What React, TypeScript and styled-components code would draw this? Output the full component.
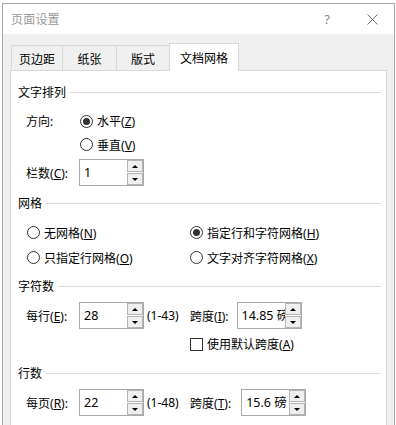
import React from 'react';
import styled, { createGlobalStyle } from 'styled-components';

const GlobalStyle = createGlobalStyle`
    html, body {
        margin: 0;
        padding: 0;
        height: 425px;
        overflow: hidden;
        background: #ffffff;
    }
    body {
        font-family: "Noto Sans", "Noto Sans CJK SC", sans-serif;
        font-size: 12px;
        color: #000000;
    }
`;

const TABS = ['页边距', '纸张', '版式', '文档网格'];
const TAB_WIDTHS = [52, 55, 54, 70];
const ACTIVE_TAB = 3;

const Mn: React.FC<{ text: string; keyChar: string }> = ({ text, keyChar }) => (
    <>
        {text}(<u>{keyChar}</u>)
    </>
);

const Radio: React.FC<{ checked?: boolean; children: React.ReactNode }> = ({ checked, children }) => (
    <RadioLabel>
        <RadioMark $checked={!!checked} />
        <span>{children}</span>
    </RadioLabel>
);

const Spinner: React.FC<{ value: string }> = ({ value }) => (
    <SpinBox>
        <SpinValue>{value}</SpinValue>
        <SpinButtons>
            <SpinButton>
                <ArrowUp />
            </SpinButton>
            <SpinButton>
                <ArrowDown />
            </SpinButton>
        </SpinButtons>
    </SpinBox>
);

const SectionHeader: React.FC<{ title: string }> = ({ title }) => (
    <HeaderRow>
        <span>{title}</span>
        <HeaderLine />
    </HeaderRow>
);

const App: React.FC = () => {
    return (
        <>
            <GlobalStyle />
            <Window>
                <TitleBar>
                    <TitleText>页面设置</TitleText>
                    <HelpButton>?</HelpButton>
                    <CloseButton>
                        <svg width="11" height="11" viewBox="0 0 11 11">
                            <path d="M0.5 0.5 L10.5 10.5 M10.5 0.5 L0.5 10.5" stroke="#707070" strokeWidth="1" />
                        </svg>
                    </CloseButton>
                </TitleBar>
                <Body>
                    <TabRow>
                        {TABS.map((tab, i) => (
                            <Tab key={tab} $active={i === ACTIVE_TAB} $width={TAB_WIDTHS[i]} $first={i === 0}>
                                {tab}
                            </Tab>
                        ))}
                    </TabRow>
                    <Panel>
                        <Section>
                            <SectionHeader title="文字排列" />
                            <SectionBody>
                                <Row $height={24} $top={7}>
                                    <FieldLabel>方向:</FieldLabel>
                                    <Radio checked>
                                        <Mn text="水平" keyChar="Z" />
                                    </Radio>
                                </Row>
                                <Row $height={23}>
                                    <FieldLabel />
                                    <Radio>
                                        <Mn text="垂直" keyChar="V" />
                                    </Radio>
                                </Row>
                                <Row $height={27} $top={3}>
                                    <FieldLabel>
                                        <Mn text="栏数" keyChar="C" />:
                                    </FieldLabel>
                                    <Spinner value="1" />
                                </Row>
                            </SectionBody>
                        </Section>

                        <Section $top={7}>
                            <SectionHeader title="网格" />
                            <SectionBody>
                                <GridRow $top={7}>
                                    <Radio>
                                        <Mn text="无网格" keyChar="N" />
                                    </Radio>
                                    <Radio checked>
                                        <Mn text="指定行和字符网格" keyChar="H" />
                                    </Radio>
                                </GridRow>
                                <GridRow>
                                    <Radio>
                                        <Mn text="只指定行网格" keyChar="O" />
                                    </Radio>
                                    <Radio>
                                        <Mn text="文字对齐字符网格" keyChar="X" />
                                    </Radio>
                                </GridRow>
                            </SectionBody>
                        </Section>

                        <Section $top={6}>
                            <SectionHeader title="字符数" />
                            <SectionBody>
                                <Row $height={27} $top={6}>
                                    <FieldLabel>
                                        <Mn text="每行" keyChar="E" />:
                                    </FieldLabel>
                                    <Spinner value="28" />
                                    <RangeLabel>(1-43)</RangeLabel>
                                    <SpanLabel>
                                        <Mn text="跨度" keyChar="I" />:
                                    </SpanLabel>
                                    <Spinner value="14.85 磅" />
                                </Row>
                                <CheckRow>
                                    <CheckMark />
                                    <span>
                                        <Mn text="使用默认跨度" keyChar="A" />
                                    </span>
                                </CheckRow>
                            </SectionBody>
                        </Section>

                        <Section $top={8}>
                            <SectionHeader title="行数" />
                            <SectionBody>
                                <Row $height={27} $top={6}>
                                    <FieldLabel>
                                        <Mn text="每页" keyChar="R" />:
                                    </FieldLabel>
                                    <Spinner value="22" />
                                    <RangeLabel>(1-48)</RangeLabel>
                                    <SpanLabel $extra={2}>
                                        <Mn text="跨度" keyChar="T" />:
                                    </SpanLabel>
                                    <Spinner value="15.6 磅" />
                                </Row>
                            </SectionBody>
                        </Section>
                    </Panel>
                </Body>
            </Window>
        </>
    );
};

const Window = styled.div`
    margin: 3px 0 0 2px;
    width: 393px;
    height: 422px;
    box-sizing: border-box;
    border: 1px solid #a6a6a6;
    border-bottom: none;
    background: #f0f0f0;
    display: flex;
    flex-direction: column;
    overflow: hidden;
`;

const TitleBar = styled.div`
    height: 30px;
    flex-shrink: 0;
    background: #ffffff;
    display: flex;
    align-items: center;
    padding-left: 8px;
    color: #999999;
`;

const TitleText = styled.div`
    flex: 1;
    letter-spacing: 0.2px;
`;

const HelpButton = styled.div`
    width: 46px;
    text-align: center;
    color: #8a8a8a;
    font-size: 13px;
`;

const CloseButton = styled.div`
    width: 44px;
    display: flex;
    justify-content: center;
    align-items: center;
`;

const Body = styled.div`
    flex: 1;
    min-height: 0;
    display: flex;
    flex-direction: column;
    padding: 9px 7px 0 7px;
`;

const TabRow = styled.div`
    display: flex;
    align-items: flex-end;
    height: 27px;
    flex-shrink: 0;
    padding-left: 1px;
    position: relative;
    z-index: 1;
`;

const Tab = styled.div<{ $active: boolean; $width: number; $first: boolean }>`
    box-sizing: border-box;
    width: ${(props) => props.$width}px;
    height: ${(props) => (props.$active ? 28 : 25)}px;
    margin-bottom: ${(props) => (props.$active ? -1 : 0)}px;
    margin-left: ${(props) => (props.$first ? 0 : -1)}px;
    border: 1px solid #d9d9d9;
    border-bottom: none;
    background: ${(props) => (props.$active ? '#ffffff' : '#f0f0f0')};
    display: flex;
    justify-content: center;
    align-items: center;
    padding-top: ${(props) => (props.$active ? 1 : 2)}px;
    position: relative;
    z-index: ${(props) => (props.$active ? 2 : 1)};
`;

const Panel = styled.div`
    width: 377px;
    box-sizing: border-box;
    flex: 1;
    min-height: 0;
    background: #ffffff;
    border: 1px solid #d9d9d9;
    border-bottom: none;
    padding: 11px 5px 0 7px;
    overflow: hidden;
`;

const Section = styled.div<{ $top?: number }>`
    margin-top: ${(props) => props.$top ?? 0}px;
`;

const HeaderRow = styled.div`
    height: 20px;
    display: flex;
    align-items: center;
    gap: 4px;
`;

const HeaderLine = styled.div`
    flex: 1;
    height: 1px;
    background: #dcdcdc;
`;

const SectionBody = styled.div`
    padding-left: 8px;
    display: flex;
    flex-direction: column;
`;

const Row = styled.div<{ $height: number; $top?: number }>`
    height: ${(props) => props.$height}px;
    margin-top: ${(props) => props.$top ?? 0}px;
    display: flex;
    align-items: center;
`;

const GridRow = styled.div<{ $top?: number }>`
    height: 25px;
    margin-top: ${(props) => props.$top ?? 0}px;
    display: grid;
    grid-template-columns: 163px 1fr;
    align-items: center;
`;

const FieldLabel = styled.div`
    width: 53px;
    flex-shrink: 0;
    white-space: nowrap;
`;

const RadioLabel = styled.label`
    display: flex;
    align-items: center;
    gap: 4px;
    white-space: nowrap;
`;

const RadioMark = styled.span<{ $checked: boolean }>`
    box-sizing: border-box;
    width: 13px;
    height: 13px;
    margin-left: 1px;
    border: 1px solid #333333;
    border-radius: 50%;
    display: flex;
    justify-content: center;
    align-items: center;
    &::after {
        content: '';
        width: 7px;
        height: 7px;
        border-radius: 50%;
        background: #333333;
        display: ${(props) => (props.$checked ? 'block' : 'none')};
    }
`;

const CheckRow = styled.label`
    height: 22px;
    margin-top: 4px;
    padding-left: 164px;
    display: flex;
    align-items: center;
    gap: 4px;
    white-space: nowrap;
`;

const CheckMark = styled.span`
    box-sizing: border-box;
    width: 13px;
    height: 13px;
    border: 1px solid #333333;
`;

const SpinBox = styled.div`
    box-sizing: border-box;
    width: 65px;
    height: 27px;
    flex-shrink: 0;
    border: 1px solid #a9a9a9;
    background: #ffffff;
    display: flex;
`;

const SpinValue = styled.div`
    flex: 1;
    min-width: 0;
    overflow: hidden;
    white-space: nowrap;
    padding-left: 4px;
    line-height: 25px;
    font-size: 12.5px;
`;

const SpinButtons = styled.div`
    width: 16px;
    flex-shrink: 0;
    display: flex;
    flex-direction: column;
    gap: 1px;
`;

const SpinButton = styled.div`
    flex: 1;
    box-sizing: border-box;
    border: 1px solid #b4b4b4;
    background: #efefef;
    display: flex;
    justify-content: center;
    align-items: center;
`;

const ArrowUp = styled.span`
    width: 0;
    height: 0;
    border-left: 3px solid transparent;
    border-right: 3px solid transparent;
    border-bottom: 3px solid #000000;
`;

const ArrowDown = styled.span`
    width: 0;
    height: 0;
    border-left: 3px solid transparent;
    border-right: 3px solid transparent;
    border-top: 3px solid #000000;
`;

const RangeLabel = styled.div`
    width: 43px;
    margin-left: 3px;
    flex-shrink: 0;
    white-space: nowrap;
`;

const SpanLabel = styled.div<{ $extra?: number }>`
    padding-right: ${(props) => 8 + (props.$extra ?? 0)}px;
    white-space: nowrap;
`;

export default App;
